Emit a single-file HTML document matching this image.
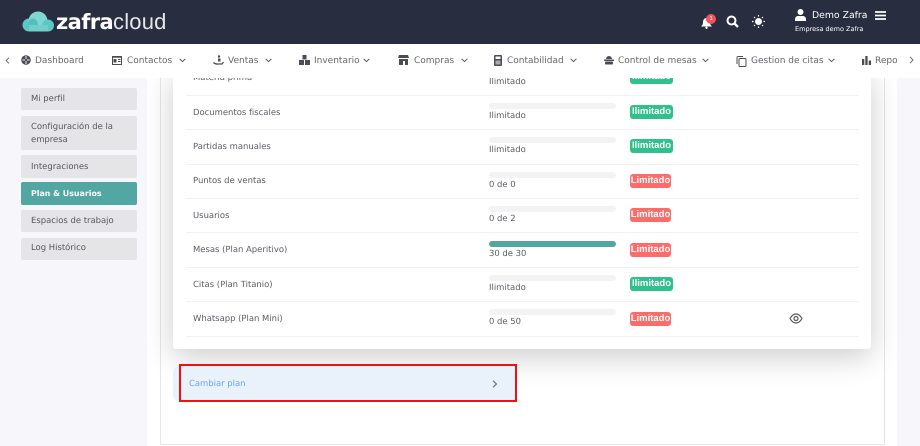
<!DOCTYPE html>
<html lang="es">
<head>
<meta charset="utf-8">
<style>
html,body{margin:0;padding:0}
body{width:920px;height:446px;overflow:hidden;position:relative;background:#f7f7fb;font-family:"DejaVu Sans","Liberation Sans",sans-serif;color:#62656d;text-rendering:geometricPrecision}
div,span,svg{position:absolute}
.t{white-space:nowrap;font-size:8.45px;line-height:12px;color:#5a5d65}
.nav{white-space:nowrap;font-size:9px;line-height:12px;color:#64676f}
.side{left:21px;width:116px;background:#e5e5e8;border-radius:2px}
.side span{left:10px;font-size:8.45px;line-height:13px;color:#55585f;white-space:nowrap}
.sep{left:186px;width:673px;height:1px;background:#f0f0f6}
.bar{left:489px;width:127px;height:6px;border-radius:3px;background:#f3f3f3}
.badge{left:630px;height:14px;border-radius:3px;color:#fff;font-family:"Liberation Sans",sans-serif;font-weight:700;font-size:9.5px;line-height:14px;text-align:center}
.g{width:43px;background:#2fc18c}
.r{width:41px;background:#ff6b6b}
svg{overflow:visible}
</style>
</head>
<body>
<div style="left:147px;top:70px;width:750px;height:376px;background:#fff"></div>
<div style="left:160px;top:70px;width:725px;height:375px;box-sizing:border-box;border:1px solid #e6e6e6;border-top:0;background:#fff"></div>

<div style="left:173px;top:70px;width:698px;height:279px;background:#fff;border-radius:0 0 3px 3px;box-shadow:0 8px 30px rgba(0,0,0,.2)"></div>

<div class="sep" style="top:95px"></div>
<div class="sep" style="top:129px"></div>
<div class="sep" style="top:164px"></div>
<div class="sep" style="top:198px"></div>
<div class="sep" style="top:232px"></div>
<div class="sep" style="top:267px"></div>
<div class="sep" style="top:301px"></div>
<div class="sep" style="top:336px"></div>

<div class="t" style="left:193px;top:71px">Materia prima</div>
<div class="t" style="left:193px;top:106px">Documentos fiscales</div>
<div class="t" style="left:193px;top:140px">Partidas manuales</div>
<div class="t" style="left:193px;top:174px">Puntos de ventas</div>
<div class="t" style="left:193px;top:209px">Usuarios</div>
<div class="t" style="left:193px;top:243px">Mesas (Plan Aperitivo)</div>
<div class="t" style="left:193px;top:278px">Citas (Plan Titanio)</div>
<div class="t" style="left:193px;top:312px">Whatsapp (Plan Mini)</div>

<div class="t" style="left:489px;top:75px">Ilimitado</div>
<div class="bar" style="top:103px"></div><div class="t" style="left:489px;top:109px">Ilimitado</div>
<div class="bar" style="top:137px"></div><div class="t" style="left:489px;top:143px">Ilimitado</div>
<div class="bar" style="top:172px"></div><div class="t" style="left:489px;top:178px">0 de 0</div>
<div class="bar" style="top:206px"></div><div class="t" style="left:489px;top:212px">0 de 2</div>
<div class="bar" style="top:241px;background:#52a7a3"></div><div class="t" style="left:489px;top:247px">30 de 30</div>
<div class="bar" style="top:275px"></div><div class="t" style="left:489px;top:281px">Ilimitado</div>
<div class="bar" style="top:309px"></div><div class="t" style="left:489px;top:315px">0 de 50</div>

<div class="badge g" style="top:70px">Ilimitado</div>
<div class="badge g" style="top:105px">Ilimitado</div>
<div class="badge g" style="top:139px">Ilimitado</div>
<div class="badge r" style="top:174px">Limitado</div>
<div class="badge r" style="top:208px">Limitado</div>
<div class="badge r" style="top:243px">Limitado</div>
<div class="badge g" style="top:277px">Ilimitado</div>
<div class="badge r" style="top:312px">Limitado</div>

<svg style="left:789px;top:313px" width="14" height="11" viewBox="0 0 14 11"><path d="M1 5.500C3 2 5 1 7 1s4 1 6 4.500C11 9 9 10 7 10S3 9 1 5.500Z" fill="none" stroke="#55585f" stroke-width="1.200"/><circle cx="7" cy="5.500" r="2" fill="none" stroke="#55585f" stroke-width="1.200"/></svg>

<!-- Cambiar plan -->
<div style="left:173px;top:365px;width:343px;height:37px;background:#e9f1fb;border-radius:8px 0 0 8px"></div>
<div style="left:179px;top:364px;width:338px;height:38px;box-sizing:border-box;border:2px solid #f40d12"></div>
<div class="t" style="left:189px;top:377px;color:#66a6ee">Cambiar plan</div>
<svg style="left:492px;top:380px" width="6" height="8" viewBox="0 0 6 8"><path d="M1 .8 4.500 4 1 7.200" fill="none" stroke="#6b7484" stroke-width="1.200"/></svg>

<!-- Sidebar -->
<div class="side" style="top:88px;height:22px"><span style="top:4px">Mi perfil</span></div>
<div class="side" style="top:116px;height:34px"><span style="top:4px">Configuración de la</span><span style="top:17px">empresa</span></div>
<div class="side" style="top:155px;height:23px"><span style="top:5px">Integraciones</span></div>
<div class="side" style="top:182px;height:23px;background:#52a7a3"><span style="top:5px;color:#fff;font-weight:700;font-size:7.900px">Plan &amp; Usuarios</span></div>
<div class="side" style="top:210px;height:22px"><span style="top:4px">Espacios de trabajo</span></div>
<div class="side" style="top:238px;height:22px"><span style="top:3px">Log Histórico</span></div>

<!-- Nav -->
<div style="left:0;top:44px;width:920px;height:34px;background:#fff"></div>
<svg style="left:5px;top:57px" width="5" height="7" viewBox="0 0 5 7"><path d="M4 .6 1.200 3.500 4 6.400" fill="none" stroke="#6d7079" stroke-width="1"/></svg>
<svg style="left:21px;top:55px" width="10" height="10" viewBox="0 0 10 10"><circle cx="5" cy="5" r="4.800" fill="#4a4d55"/><path d="M5 1v3M1.500 5h2.500M6 5h2.500M5 6v3" stroke="#fff" stroke-width=".9"/></svg>
<div class="nav" style="left:35px;top:55px">Dashboard</div>
<svg style="left:112px;top:56px" width="10" height="9" viewBox="0 0 10 9"><rect x=".5" y=".5" width="9" height="8" fill="none" stroke="#4a4d55"/><rect x="1.500" y="3" width="3" height="3.500" fill="#4a4d55"/><path d="M6 3.500h2.500M6 5.500h2.500" stroke="#4a4d55"/><path d="M0 1h10" stroke="#4a4d55" stroke-width="1.500"/></svg>
<div class="nav" style="left:127px;top:55px">Contactos</div>
<svg style="left:179px;top:58px" width="7" height="5" viewBox="0 0 7 5"><path d="M.6 .8 3.500 3.600 6.400 .8" fill="none" stroke="#555" stroke-width="1"/></svg>
<svg style="left:213px;top:55px" width="11" height="11" viewBox="0 0 11 11"><circle cx="6" cy="1.500" r="1.200" fill="#4a4d55"/><rect x="5" y="3.500" width="2.500" height="3" fill="#4a4d55"/><path d="M.5 7.500c2 2 3 1.500 5 1.500h3.500l1.500-2" fill="none" stroke="#4a4d55" stroke-width="1.300"/></svg>
<div class="nav" style="left:228px;top:55px">Ventas</div>
<svg style="left:265px;top:58px" width="7" height="5" viewBox="0 0 7 5"><path d="M.6 .8 3.500 3.600 6.400 .8" fill="none" stroke="#555" stroke-width="1"/></svg>
<svg style="left:299px;top:55px" width="11" height="10" viewBox="0 0 11 10"><rect x="3.500" y="0" width="4" height="4.500" fill="#4a4d55"/><rect x="0" y="5" width="5" height="5" fill="#4a4d55"/><rect x="6" y="5" width="5" height="5" fill="#4a4d55"/></svg>
<div class="nav" style="left:314px;top:55px">Inventario</div>
<svg style="left:363px;top:58px" width="7" height="5" viewBox="0 0 7 5"><path d="M.6 .8 3.500 3.600 6.400 .8" fill="none" stroke="#555" stroke-width="1"/></svg>
<svg style="left:398px;top:55px" width="11" height="10" viewBox="0 0 11 10"><path d="M1 0h9l1 3H0Z" fill="#4a4d55"/><path d="M1 4h9v6H7V6H5v4H1Z" fill="#4a4d55"/></svg>
<div class="nav" style="left:414px;top:55px">Compras</div>
<svg style="left:461px;top:58px" width="7" height="5" viewBox="0 0 7 5"><path d="M.6 .8 3.500 3.600 6.400 .8" fill="none" stroke="#555" stroke-width="1"/></svg>
<svg style="left:494px;top:55px" width="8" height="11" viewBox="0 0 8 11"><rect width="8" height="11" rx="1" fill="#4a4d55"/><rect x="1.500" y="1.500" width="5" height="2.500" fill="#fff"/><rect x="1.500" y="5.500" width="5" height="4" fill="#aaa"/></svg>
<div class="nav" style="left:507px;top:55px">Contabilidad</div>
<svg style="left:570px;top:58px" width="7" height="5" viewBox="0 0 7 5"><path d="M.6 .8 3.500 3.600 6.400 .8" fill="none" stroke="#555" stroke-width="1"/></svg>
<svg style="left:604px;top:56px" width="10" height="9" viewBox="0 0 10 9"><path d="M2 3a3 3 0 0 1 6 0Z" fill="#4a4d55"/><rect x="0" y="3.500" width="10" height="1.500" fill="#4a4d55"/><rect x="1" y="5.500" width="8" height="3" rx="1" fill="#4a4d55"/></svg>
<div class="nav" style="left:618px;top:55px">Control de mesas</div>
<svg style="left:702px;top:58px" width="7" height="5" viewBox="0 0 7 5"><path d="M.6 .8 3.500 3.600 6.400 .8" fill="none" stroke="#555" stroke-width="1"/></svg>
<svg style="left:736px;top:56px" width="11" height="11" viewBox="0 0 11 11"><rect x="3" y="2.500" width="7" height="8" rx="1" fill="none" stroke="#4a4d55"/><path d="M1 8V1.500A1 1 0 0 1 2 .5h5" fill="none" stroke="#4a4d55"/></svg>
<div class="nav" style="left:751px;top:55px">Gestion de citas</div>
<svg style="left:828px;top:58px" width="7" height="5" viewBox="0 0 7 5"><path d="M.6 .8 3.500 3.600 6.400 .8" fill="none" stroke="#555" stroke-width="1"/></svg>
<svg style="left:862px;top:56px" width="9" height="9" viewBox="0 0 9 9"><rect x="0" y="3" width="2.300" height="6" fill="#4a4d55"/><rect x="3.300" y="0" width="2.300" height="9" fill="#4a4d55"/><rect x="6.700" y="4.500" width="2.300" height="4.500" fill="#4a4d55"/></svg>
<div class="nav" style="left:875px;top:55px">Repo</div>
<div style="left:907px;top:44px;width:13px;height:34px;background:#fff"></div>
<svg style="left:909px;top:56px" width="5" height="8" viewBox="0 0 5 8"><path d="M1 .8 4 4 1 7.200" fill="none" stroke="#6d7079" stroke-width="1"/></svg>

<!-- Header -->
<div style="left:0;top:0;width:920px;height:44px;background:#282d40"></div>
<svg style="left:22px;top:11px" width="32" height="21" viewBox="0 0 32 21">
<circle cx="7" cy="14" r="6.500" fill="#5bc8c6"/><circle cx="16" cy="10" r="9.500" fill="#7fd6d2"/><circle cx="26" cy="14.500" r="6" fill="#5bc8c6"/><ellipse cx="11" cy="14" rx="5" ry="6.500" fill="#56bdbd"/><rect x="7" y="14" width="19" height="6.500" fill="#6fcfcb"/>
</svg>
<div style="left:56px;top:9px;font-family:'DejaVu Sans',sans-serif;font-size:21px;line-height:26px;color:#fff;white-space:nowrap;letter-spacing:-.6px;font-weight:700">zafra</div>
<div style="left:113px;top:9px;font-family:'Liberation Sans',sans-serif;font-size:22px;line-height:26px;color:#e4e6ea;white-space:nowrap;letter-spacing:.2px">cloud</div>

<svg style="left:701px;top:18px" width="11" height="11" viewBox="0 0 11 11"><path d="M5.500 0C3 0 2 2 2 4.500 2 6.500 1 7.500 0 8.500h11c-1-1-2-2-2-4C9 2 8 0 5.500 0Z" fill="#fff"/><circle cx="5.500" cy="9.800" r="1.200" fill="#fff"/></svg>
<div style="left:706px;top:14px;width:10px;height:10px;border-radius:50%;background:#f2545f;color:#fff;font-family:'Liberation Sans',sans-serif;font-size:6px;line-height:10px;text-align:center">1</div>
<svg style="left:726px;top:15px" width="13" height="13" viewBox="0 0 13 13"><circle cx="5.500" cy="5.500" r="4" fill="none" stroke="#fff" stroke-width="2"/><path d="M8.500 8.500 12 12" stroke="#fff" stroke-width="2.300"/></svg>
<svg style="left:752px;top:15px" width="13" height="13" viewBox="0 0 13 13"><circle cx="6.500" cy="6.500" r="3.500" fill="#fff"/><g stroke="#fff" stroke-width="1.200"><path d="M6.500 0v1.500M6.500 11.500V13M0 6.500h1.500M11.500 6.500H13M2 2l1 1M10 10l1 1M2 11l1-1M10 3l1-1"/></g></svg>
<svg style="left:795px;top:9px" width="11" height="12" viewBox="0 0 11 12"><circle cx="5.500" cy="3" r="3" fill="#fff"/><path d="M0 12V10C0 8 2 7 3 7h5c1 0 3 1 3 3v2Z" fill="#fff"/></svg>
<div style="left:812px;top:9px;font-family:'DejaVu Sans',sans-serif;font-size:9.300px;line-height:13px;color:#fff;white-space:nowrap">Demo Zafra</div>
<svg style="left:875px;top:11px" width="11" height="9" viewBox="0 0 11 9"><path d="M0 1h11M0 4.500h11M0 8h11" stroke="#fff" stroke-width="1.700"/></svg>
<div style="left:795px;top:25px;font-family:'DejaVu Sans',sans-serif;font-size:6.500px;line-height:9px;color:#fff;white-space:nowrap">Empresa demo Zafra</div>
</body>
</html>
